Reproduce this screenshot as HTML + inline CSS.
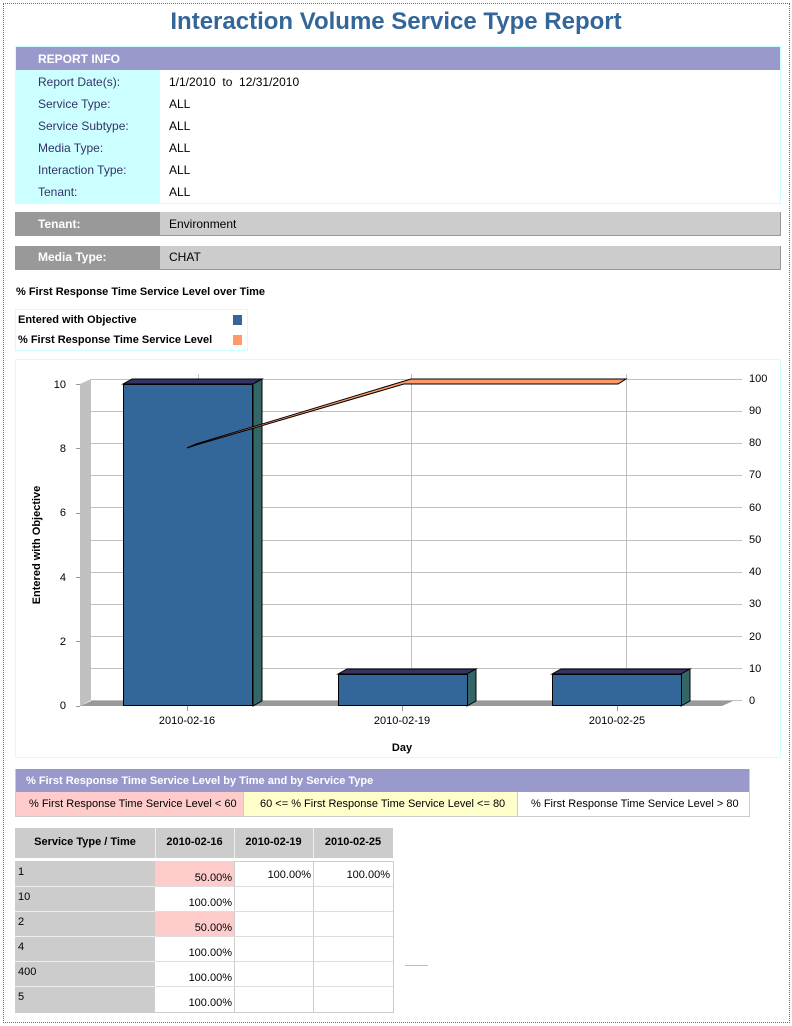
<!DOCTYPE html>
<html><head><meta charset="utf-8"><style>
*{margin:0;padding:0;box-sizing:border-box}
body{width:792px;height:1026px;background:#fff;font-family:"Liberation Sans",Arial,sans-serif;position:relative;overflow:hidden}
.a{position:absolute}
.t12{font-size:12px;color:#000}
.lab{font-size:12px;color:#333366}
.b11{font-size:11px;font-weight:bold}
</style></head><body>
<div class="a" style="left:3px;top:3px;width:787px;height:1020px;border:1px dotted #666699"></div>
<div class="a" style="left:0;top:8px;width:792px;text-align:center;font-size:24px;font-weight:bold;color:#336699">Interaction Volume Service Type Report</div>

<div class="a" style="left:15px;top:46px;width:766px;height:158px;border:1px solid #ccffff"></div>
<div class="a" style="left:16px;top:47px;width:764px;height:23px;background:#9999cc;color:#fff;font-size:12px;font-weight:bold;padding:5px 0 0 22px">REPORT INFO</div>
<div class="a" style="left:16px;top:70px;width:144px;height:133px;background:#ccffff"></div>
<div class="a lab" style="left:38px;top:71px;line-height:22px">Report Date(s):<br>Service Type:<br>Service Subtype:<br>Media Type:<br>Interaction Type:<br>Tenant:</div>
<div class="a t12" style="left:169px;top:71px;line-height:22px">1/1/2010&nbsp; to &nbsp;12/31/2010<br>ALL<br>ALL<br>ALL<br>ALL<br>ALL</div>

<div class="a" style="left:15px;top:212px;width:145px;height:24px;background:#999;color:#fff;font-size:12px;font-weight:bold;padding:5px 0 0 23px">Tenant:</div>
<div class="a t12" style="left:160px;top:212px;width:621px;height:24px;background:#ccc;border-right:1px solid #999;border-bottom:1px solid #999;padding:5px 0 0 9px">Environment</div>
<div class="a" style="left:15px;top:246px;width:145px;height:24px;background:#999;color:#fff;font-size:12px;font-weight:bold;padding:4px 0 0 23px">Media Type:</div>
<div class="a t12" style="left:160px;top:246px;width:621px;height:24px;background:#ccc;border-right:1px solid #999;border-bottom:1px solid #999;padding:4px 0 0 9px">CHAT</div>

<div class="a b11" style="left:16px;top:286px">% First Response Time Service Level over Time</div>
<div class="a" style="left:15px;top:309px;width:233px;height:42px;border:1px solid #ccffff"></div>
<div class="a b11" style="left:18px;top:310px;line-height:20px">Entered with Objective<br>% First Response Time Service Level</div>
<div class="a" style="left:233px;top:315px;width:9px;height:10px;background:#336699"></div>
<div class="a" style="left:233px;top:335px;width:9px;height:10px;background:#ff9966"></div>

<div class="a" style="left:15px;top:359px;width:766px;height:399px;border:1px solid #ccffff"></div>
<svg class="a" style="left:0;top:0" width="792" height="1026" font-family="Liberation Sans,Arial,sans-serif" font-size="11">
<g stroke="#c0c0c0" stroke-width="1">
<line x1="91" y1="379.5" x2="742" y2="379.5"/><line x1="91" y1="411.5" x2="742" y2="411.5"/><line x1="91" y1="443.5" x2="742" y2="443.5"/><line x1="91" y1="475.5" x2="742" y2="475.5"/><line x1="91" y1="507.5" x2="742" y2="507.5"/><line x1="91" y1="540.5" x2="742" y2="540.5"/><line x1="91" y1="572.5" x2="742" y2="572.5"/><line x1="91" y1="604.5" x2="742" y2="604.5"/><line x1="91" y1="636.5" x2="742" y2="636.5"/><line x1="91" y1="668.5" x2="742" y2="668.5"/><line x1="91" y1="700.5" x2="742" y2="700.5"/>
<line x1="198.5" y1="374" x2="198.5" y2="700"/><line x1="411.5" y1="374" x2="411.5" y2="700"/><line x1="626.5" y1="374" x2="626.5" y2="700"/>
</g>
<polygon points="80,384 91,379 91,700 80,706" fill="#c0c0c0"/>
<polygon points="80,706 91,701 733,701 722,706" fill="#999"/>
<g stroke="#999"><line x1="76" y1="384.5" x2="80" y2="384.5"/><line x1="76" y1="448.5" x2="80" y2="448.5"/><line x1="76" y1="513.5" x2="80" y2="513.5"/><line x1="76" y1="577.5" x2="80" y2="577.5"/><line x1="76" y1="641.5" x2="80" y2="641.5"/><line x1="76" y1="706.5" x2="80" y2="706.5"/>
<line x1="187.5" y1="706" x2="187.5" y2="711"/><line x1="402.5" y1="706" x2="402.5" y2="711"/><line x1="617.5" y1="706" x2="617.5" y2="711"/></g>
<g stroke="#000" stroke-width="1">
<polygon points="123,384 132,379 262,379 253,384" fill="#333366"/>
<polygon points="253,384 262,379 262,701 253,706" fill="#336666"/>
<rect x="123.5" y="384.5" width="129" height="321" fill="#336699"/>
<polygon points="338,674 347,669 476,669 467,674" fill="#333366"/>
<polygon points="467,674 476,669 476,701 467,706" fill="#336666"/>
<rect x="338.5" y="674.5" width="129" height="31" fill="#336699"/>
<polygon points="552,674 561,669 690,669 681,674" fill="#333366"/>
<polygon points="681,674 690,669 690,701 681,706" fill="#336666"/>
<rect x="552.5" y="674.5" width="129" height="31" fill="#336699"/>
<polygon points="187,448 196,444 411,379 626,379 618,384 404,384 196,445" fill="#ff9966"/>
</g>
<g text-anchor="end" fill="#000"><text x="66" y="388">10</text><text x="66" y="452">8</text><text x="66" y="516">6</text><text x="66" y="581">4</text><text x="66" y="645">2</text><text x="66" y="709">0</text></g>
<g fill="#000"><text x="749" y="382">100</text><text x="749" y="414">90</text><text x="749" y="446">80</text><text x="749" y="478">70</text><text x="749" y="511">60</text><text x="749" y="543">50</text><text x="749" y="575">40</text><text x="749" y="607">30</text><text x="749" y="640">20</text><text x="749" y="672">10</text><text x="749" y="704">0</text></g>
<g text-anchor="middle" fill="#000"><text x="187" y="724">2010-02-16</text><text x="402" y="724">2010-02-19</text><text x="617" y="724">2010-02-25</text>
<text x="402" y="751" font-weight="bold">Day</text>
<text transform="translate(40,545) rotate(-90)" font-weight="bold" font-size="11">Entered with Objective</text></g>
<line x1="405" y1="965.5" x2="428" y2="965.5" stroke="#bbb"/>
</svg>

<div class="a" style="left:15px;top:769px;width:735px;height:48px;border:1px solid #ccc"></div>
<div class="a b11" style="left:16px;top:769px;width:733px;height:23px;background:#9999cc;color:#fff;padding:6px 0 0 10px">% First Response Time Service Level by Time and by Service Type</div>
<div class="a" style="left:16px;top:792px;width:228px;height:24px;background:#ffcccc;font-size:11px;padding:6px 0 0 13px;border-right:1px solid #ccc">% First Response Time Service Level &lt; 60</div>
<div class="a" style="left:244px;top:792px;width:274px;height:24px;background:#ffffcc;font-size:11px;padding:6px 0 0 16px;border-right:1px solid #ccc">60 &lt;= % First Response Time Service Level &lt;= 80</div>
<div class="a" style="left:518px;top:792px;width:231px;height:24px;font-size:11px;padding:6px 0 0 13px">% First Response Time Service Level &gt; 80</div>

<div class="a" style="left:15px;top:828px;width:378px;height:30px;background:#ccc"></div>
<div class="a b11" style="left:15px;top:836px;width:140px;text-align:center">Service Type / Time</div>
<div class="a b11" style="left:155px;top:836px;width:79px;text-align:center">2010-02-16</div>
<div class="a b11" style="left:234px;top:836px;width:79px;text-align:center">2010-02-19</div>
<div class="a b11" style="left:313px;top:836px;width:80px;text-align:center">2010-02-25</div>
<div class="a" style="left:155px;top:828px;width:1px;height:30px;background:#eee"></div>
<div class="a" style="left:234px;top:828px;width:1px;height:30px;background:#eee"></div>
<div class="a" style="left:313px;top:828px;width:1px;height:30px;background:#eee"></div>

<div class="a" style="left:15px;top:861px;width:140px;height:152px;background:#ccc"></div>
<div class="a" style="left:155px;top:861px;width:239px;height:152px;border:1px solid #ccc;border-left:none"></div>
<div class="a" style="left:155px;top:861px;width:79px;height:25px;background:#ffcccc"></div>
<div class="a" style="left:155px;top:911px;width:79px;height:25px;background:#ffcccc"></div>
<div class="a" style="left:234px;top:861px;width:1px;height:152px;background:#ccc"></div>
<div class="a" style="left:313px;top:861px;width:1px;height:152px;background:#ccc"></div>
<div class="a" style="left:15px;top:886px;width:378px;height:1px;background:#eee"></div>
<div class="a" style="left:15px;top:911px;width:378px;height:1px;background:#eee"></div>
<div class="a" style="left:15px;top:936px;width:378px;height:1px;background:#eee"></div>
<div class="a" style="left:15px;top:961px;width:378px;height:1px;background:#eee"></div>
<div class="a" style="left:15px;top:986px;width:378px;height:1px;background:#eee"></div>
<div class="a" style="left:155px;top:886px;width:238px;height:1px;background:#ddd"></div>
<div class="a" style="left:155px;top:911px;width:238px;height:1px;background:#ddd"></div>
<div class="a" style="left:155px;top:936px;width:238px;height:1px;background:#ddd"></div>
<div class="a" style="left:155px;top:961px;width:238px;height:1px;background:#ddd"></div>
<div class="a" style="left:155px;top:986px;width:238px;height:1px;background:#ddd"></div>

<div class="a" style="left:18px;top:860px;font-size:11px;line-height:25px">1<br>10<br>2<br>4<br>400<br>5</div>
<div class="a" style="left:155px;top:866px;width:77px;text-align:right;font-size:11px;line-height:25px">50.00%<br>100.00%<br>50.00%<br>100.00%<br>100.00%<br>100.00%</div>
<div class="a" style="left:234px;top:869px;width:77px;text-align:right;font-size:11px">100.00%</div>
<div class="a" style="left:313px;top:869px;width:77px;text-align:right;font-size:11px">100.00%</div>
</body></html>
